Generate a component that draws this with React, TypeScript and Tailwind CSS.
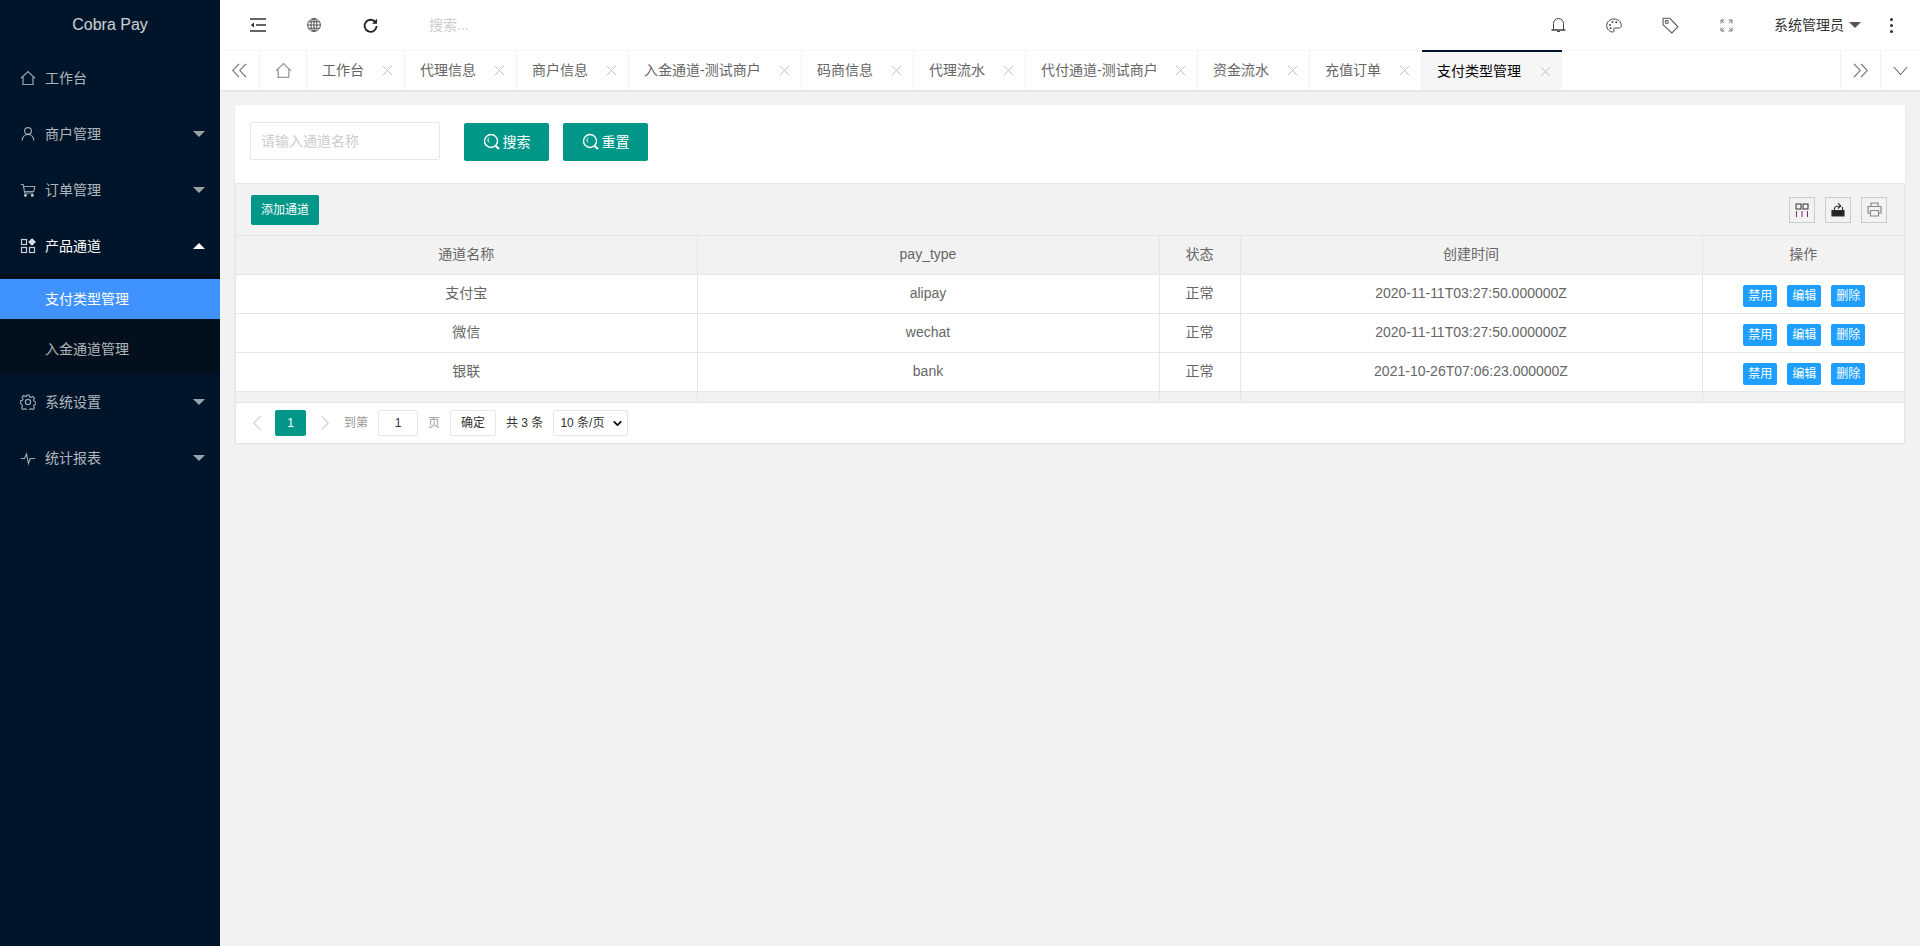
import { ReactNode } from "react";
import { ChevronDown, ChevronLeft, ChevronRight, X } from "lucide-react";

type MenuItem = {
    label: string;
    icon: ReactNode;
    arrow?: "down" | "up";
    active?: boolean;
    children?: { label: string; active?: boolean }[];
};

const Svg = ({ size = 16, children }: { size?: number; children: ReactNode }) => (
    <svg width={size} height={size} viewBox="0 0 16 16" fill="none" stroke="currentColor" strokeWidth="1.2">
        {children}
    </svg>
);

const MENU: MenuItem[] = [
    {
        label: "工作台",
        icon: (
            <Svg>
                <path d="M1 8.200 8 1.500l7 6.700M3 7v7.500h10V7" />
            </Svg>
        ),
    },
    {
        label: "商户管理",
        arrow: "down",
        icon: (
            <Svg>
                <circle cx="8" cy="5" r="3.400" />
                <path d="M2.200 14.500c.3-3.600 2.600-6 5.800-6s5.500 2.400 5.800 6" />
            </Svg>
        ),
    },
    {
        label: "订单管理",
        arrow: "down",
        icon: (
            <Svg>
                <path d="M.8 2.500h2.400l1.500 8.500h8.600M3.600 4.500h11.200l-1 5H4.500" />
                <circle cx="5.500" cy="13.300" r="1" fill="currentColor" />
                <circle cx="12.300" cy="13.300" r="1" fill="currentColor" />
            </Svg>
        ),
    },
    {
        label: "产品通道",
        arrow: "up",
        active: true,
        icon: (
            <Svg>
                <rect x="1.500" y="1.500" width="5" height="5" />
                <rect x="1.500" y="9.500" width="5" height="5" />
                <rect x="9.500" y="9.500" width="5" height="5" />
                <path d="M12 1l3 3-3 3-3-3z" fill="currentColor" />
            </Svg>
        ),
        children: [{ label: "支付类型管理", active: true }, { label: "入金通道管理" }],
    },
    {
        label: "系统设置",
        arrow: "down",
        icon: (
            <Svg>
                <circle cx="8" cy="8" r="2.600" />
                <path d="M6.800 1h2.400l.4 1.900 1.500.7 1.700-1 1.700 1.700-1 1.700.7 1.500 1.800.4v2.400l-1.800.4-.7 1.500 1 1.700-1.700 1.700-1.700-1-1.500.7-.4 1.800H6.800l-.4-1.800-1.500-.7-1.700 1-1.700-1.700 1-1.700-.7-1.500L.5 9.200V6.800l1.800-.4.700-1.500-1-1.700 1.700-1.700 1.700 1 1.500-.7z" />
            </Svg>
        ),
    },
    {
        label: "统计报表",
        arrow: "down",
        icon: (
            <Svg>
                <path d="M.8 8.500h3.700l2-4.500 2 9.500 1.700-5h5" />
            </Svg>
        ),
    },
];

const TABS = [
    { label: "工作台", width: 98 },
    { label: "代理信息", width: 112 },
    { label: "商户信息", width: 112 },
    { label: "入金通道-测试商户", width: 173 },
    { label: "码商信息", width: 112 },
    { label: "代理流水", width: 112 },
    { label: "代付通道-测试商户", width: 172 },
    { label: "资金流水", width: 112 },
    { label: "充值订单", width: 112 },
];

const ROWS = [
    { name: "支付宝", type: "alipay", time: "2020-11-11T03:27:50.000000Z" },
    { name: "微信", type: "wechat", time: "2020-11-11T03:27:50.000000Z" },
    { name: "银联", type: "bank", time: "2021-10-26T07:06:23.000000Z" },
];

const SearchIcon = () => (
    <svg width="18" height="18" viewBox="0 0 18 18" fill="none" stroke="currentColor" className="mr-[2px]">
        <circle cx="8" cy="8" r="6.500" strokeWidth="1.400" />
        <path d="M6 4.500c-1.300 1-1.300 4 0 5" strokeWidth="1" />
        <path d="M12.700 13l3.300 3" strokeWidth="2.200" />
    </svg>
);

function Sidebar() {
    return (
        <aside className="flex h-full w-[220px] shrink-0 flex-col bg-[#00152a]">
            <div className="h-[50px] text-center text-[16px] leading-[50px] text-white/80">Cobra Pay</div>
            {MENU.map((item) => (
                <div key={item.label}>
                    <div
                        className={`flex h-[56px] items-center pl-[20px] pr-[15px] text-[14px] ${
                            item.active ? "text-white" : "text-white/70"
                        }`}
                    >
                        <span className={`mr-[9px] ${item.active ? "text-white/80" : "text-white/60"}`}>{item.icon}</span>
                        <span className="flex-1">{item.label}</span>
                        {item.arrow === "down" && (
                            <span className="border-x-[6px] border-t-[6px] border-x-transparent border-t-white/60" />
                        )}
                        {item.arrow === "up" && (
                            <span className="border-x-[6px] border-b-[6px] border-x-transparent border-b-white" />
                        )}
                    </div>
                    {item.children && (
                        <div className="flex flex-col gap-[10px] bg-[#020f1c] py-[5px]">
                            {item.children.map((child) => (
                                <div
                                    key={child.label}
                                    className={`h-[40px] pl-[45px] text-[14px] leading-[40px] ${
                                        child.active ? "bg-[#3f92ff] text-white" : "text-white/70"
                                    }`}
                                >
                                    {child.label}
                                </div>
                            ))}
                        </div>
                    )}
                </div>
            ))}
        </aside>
    );
}

function Header() {
    return (
        <header className="flex h-[50px] shrink-0 items-center bg-white pl-[10px] pr-[27px] text-[#333]">
            <div className="flex h-full w-[56px] items-center justify-center">
                <svg width="16" height="14" viewBox="0 0 16 14" fill="none" stroke="currentColor" strokeWidth="1.300">
                    <path d="M0 1h16M6 7h10M0 13h16" />
                    <path d="M4 4.500v5L.8 7z" fill="currentColor" stroke="none" />
                </svg>
            </div>
            <div className="flex h-full w-[56px] items-center justify-center">
                <svg width="14" height="14" viewBox="0 0 14 14" fill="none" stroke="#444" strokeWidth="0.900">
                    <circle cx="7" cy="7" r="6.400" />
                    <ellipse cx="7" cy="7" rx="3" ry="6.400" />
                    <path d="M7 .6v12.800M.6 7h12.800M1.500 3.800h11M1.500 10.200h11" />
                </svg>
            </div>
            <div className="flex h-full w-[56px] items-center justify-center">
                <svg width="15" height="15" viewBox="0 0 15 15" fill="none" stroke="#222" strokeWidth="1.800">
                    <path d="M12.500 4.300A6 6 0 1 0 13.600 8" />
                    <path d="M14 .8v4.900H9.100" fill="#222" stroke="none" />
                </svg>
            </div>
            <div className="ml-[31px] flex-1 text-[14px] text-[#ccc]">搜索...</div>
            <div className="flex h-full w-[56px] items-center justify-center">
                <svg width="15" height="16" viewBox="0 0 15 16" fill="none" stroke="#444" strokeWidth="1">
                    <path d="M2.500 12.800V6.500a5 5 0 0 1 10 0v6.300" />
                    <path d="M.5 13h14" strokeWidth="1.300" stroke="#222" />
                    <path d="M6 14.500h3" />
                </svg>
            </div>
            <div className="flex h-full w-[56px] items-center justify-center">
                <svg width="16" height="15" viewBox="0 0 16 15" fill="none" stroke="#444" strokeWidth="1">
                    <path d="M8 1C4 1 .7 3.800.7 7.500S3.700 14 6.800 14c1.500 0 1.300-1.500.9-2.300-.4-1 .3-1.700 1.300-1.700h3.500c1.800 0 2.800-1 2.800-2.500C15.300 3.800 12 1 8 1z" />
                    <circle cx="4" cy="7" r="1" fill="#444" stroke="none" />
                    <circle cx="6.500" cy="4" r="1" fill="#444" stroke="none" />
                    <circle cx="10.300" cy="4.200" r="1" fill="#444" stroke="none" />
                    <circle cx="4.600" cy="10.200" r="1" fill="#444" stroke="none" />
                </svg>
            </div>
            <div className="flex h-full w-[56px] items-center justify-center">
                <svg width="17" height="17" viewBox="0 0 16 16" fill="none" stroke="#555" strokeWidth="1">
                    <path d="M1 1.200h6.300l7.700 8-5.700 5.800L1 7.400z" />
                    <circle cx="4.500" cy="4.600" r="1.400" />
                </svg>
            </div>
            <div className="flex h-full w-[56px] items-center justify-center">
                <svg width="13" height="13" viewBox="0 0 13 13" fill="none" stroke="#777" strokeWidth="1">
                    <path d="M1 4.500V1h3.500M1 1l3 3M12 4.500V1H8.500M12 1 9 4M1 8.500V12h3.500M1 12l3-3M12 8.500V12H8.500M12 12 9 9" />
                </svg>
            </div>
            <div className="ml-[20px] flex items-center text-[14px] text-[#333]">
                系统管理员
                <span className="ml-[5px] border-x-[6px] border-t-[6px] border-x-transparent border-t-[#555]" />
            </div>
            <div className="ml-[29px] flex flex-col gap-[3px]">
                <span className="h-[3px] w-[3px] rounded-full bg-[#333]" />
                <span className="h-[3px] w-[3px] rounded-full bg-[#333]" />
                <span className="h-[3px] w-[3px] rounded-full bg-[#333]" />
            </div>
        </header>
    );
}

function TabBar() {
    return (
        <div className="flex h-[40px] shrink-0 items-stretch border-t border-[#f6f6f6] bg-white text-[14px] text-[#666] shadow-[0_1px_2px_rgba(0,0,0,0.1)]">
            <div className="flex w-[40px] items-center justify-center border-r border-[#f2f2f2]">
                <svg width="15" height="15" viewBox="0 0 15 15" fill="none" stroke="#666" strokeWidth="1.100">
                    <path d="M7 .8.8 7.500 7 14.200M14 .8 7.800 7.500 14 14.200" />
                </svg>
            </div>
            <div className="flex w-[47px] items-center justify-center border-r border-[#f2f2f2] text-[#999]">
                <Svg size={17}>
                    <path d="M1 8.200 8 1.500l7 6.700M3 7v7.500h10V7" />
                </Svg>
            </div>
            {TABS.map((tab) => (
                <div
                    key={tab.label}
                    className="flex items-center justify-between border-r border-[#f2f2f2] pl-[15px] pr-[8px]"
                    style={{ width: tab.width }}
                >
                    <span>{tab.label}</span>
                    <X size={17} strokeWidth={1.200} className="text-[#bbb]" />
                </div>
            ))}
            <div className="-mt-px flex w-[140px] items-center justify-between border-t-2 border-[#00152a] bg-[#f6f6f6] pl-[15px] pr-[8px] text-black">
                <span>支付类型管理</span>
                <X size={17} strokeWidth={1.200} className="text-[#bbb]" />
            </div>
            <div className="flex-1" />
            <div className="flex w-[40px] items-center justify-center border-l border-[#f2f2f2]">
                <svg width="15" height="15" viewBox="0 0 15 15" fill="none" stroke="#666" strokeWidth="1.100">
                    <path d="M1 .8 7.200 7.500 1 14.200M8 .8l6.200 6.700L8 14.200" />
                </svg>
            </div>
            <div className="flex w-[40px] items-center justify-center border-l border-[#f2f2f2]">
                <svg width="15" height="10" viewBox="0 0 15 10" fill="none" stroke="#666" strokeWidth="1.100">
                    <path d="M.8 1 7.500 8.500 14.200 1" />
                </svg>
            </div>
        </div>
    );
}

function ToolIcon({ children }: { children: ReactNode }) {
    return (
        <div className="flex h-[26px] w-[26px] items-center justify-center border border-[#ccc] text-[#333]">
            {children}
        </div>
    );
}

function DataTable() {
    const th = "h-[38px] border-r border-b border-[#e6e6e6] text-center font-normal";
    const td = "h-[39px] border-r border-b border-[#e6e6e6] text-center";
    return (
        <table className="w-full table-fixed border-collapse text-[14px] text-[#666]">
            <colgroup>
                <col className="w-[461px]" />
                <col className="w-[462px]" />
                <col className="w-[81px]" />
                <col className="w-[462px]" />
                <col />
            </colgroup>
            <thead>
                <tr className="bg-[#f2f2f2]">
                    <th className={th}>通道名称</th>
                    <th className={th}>pay_type</th>
                    <th className={th}>状态</th>
                    <th className={th}>创建时间</th>
                    <th className={`${th} border-r-0`}>操作</th>
                </tr>
            </thead>
            <tbody>
                {ROWS.map((row) => (
                    <tr key={row.type}>
                        <td className={td}>{row.name}</td>
                        <td className={td}>{row.type}</td>
                        <td className={td}>正常</td>
                        <td className={td}>{row.time}</td>
                        <td className={`${td} border-r-0`}>
                            <div className="flex justify-center gap-[10px] pl-[2px] pt-[4px]">
                                {["禁用", "编辑", "删除"].map((action) => (
                                    <span
                                        key={action}
                                        className="h-[22px] w-[34px] rounded-[2px] bg-[#1e9fff] text-center text-[12px] leading-[22px] text-white"
                                    >
                                        {action}
                                    </span>
                                ))}
                            </div>
                        </td>
                    </tr>
                ))}
                <tr className="bg-[#f2f2f2]">
                    <td className="h-[11px] border-r border-[#e6e6e6]" />
                    <td className="h-[11px] border-r border-[#e6e6e6]" />
                    <td className="h-[11px] border-r border-[#e6e6e6]" />
                    <td className="h-[11px] border-r border-[#e6e6e6]" />
                    <td className="h-[11px]" />
                </tr>
            </tbody>
        </table>
    );
}

function Pager() {
    return (
        <div className="flex h-[41px] items-center border-t border-[#e6e6e6] bg-white text-[12px] text-[#999]">
            <ChevronLeft size={26} strokeWidth={1} className="ml-[8px] text-[#d2d2d2]" />
            <span className="ml-[5px] h-[26px] w-[31px] rounded-[2px] bg-[#009688] text-center leading-[26px] text-white">1</span>
            <ChevronRight size={26} strokeWidth={1} className="ml-[6px] text-[#d2d2d2]" />
            <span className="ml-[6px]">到第</span>
            <span className="ml-[10px] h-[26px] w-[40px] rounded-[2px] border border-[#e6e6e6] text-center leading-[24px] text-[#333]">1</span>
            <span className="ml-[10px]">页</span>
            <span className="ml-[10px] h-[26px] w-[46px] rounded-[2px] border border-[#e6e6e6] text-center leading-[24px] text-[#333]">确定</span>
            <span className="ml-[10px] text-[#333]">共 3 条</span>
            <span className="ml-[10px] flex h-[26px] w-[75px] items-center justify-between rounded-[2px] border border-[#e6e6e6] pl-[6px] pr-[3px] text-[#333]">
                10 条/页
                <ChevronDown size={13} strokeWidth={3} className="text-black" />
            </span>
        </div>
    );
}

export default function App() {
    return (
        <div className="flex h-screen w-full overflow-hidden bg-[#f2f2f2] font-['Liberation_Sans','Noto_Sans_CJK_SC',sans-serif]">
            <Sidebar />
            <main className="flex min-w-0 flex-1 flex-col">
                <Header />
                <TabBar />
                <div className="mx-[15px] mt-[15px] rounded-[2px] bg-white shadow-[0_1px_2px_rgba(0,0,0,0.08)]">
                    {/* Search form */}
                    <div className="flex h-[78px] items-start pl-[15px] pt-[17px]">
                        <div className="h-[38px] w-[190px] rounded-[2px] border border-[#e6e6e6] pl-[10px] text-[14px] leading-[36px] text-[#ccc]">
                            请输入通道名称
                        </div>
                        <button className="ml-[24px] mt-[1px] flex h-[38px] w-[85px] items-center justify-center rounded-[2px] bg-[#009688] text-[14px] text-white">
                            <SearchIcon />
                            搜索
                        </button>
                        <button className="ml-[14px] mt-[1px] flex h-[38px] w-[85px] items-center justify-center rounded-[2px] bg-[#009688] text-[14px] text-white">
                            <SearchIcon />
                            重置
                        </button>
                    </div>

                    {/* Table box */}
                    <div className="border-x border-t border-[#e6e6e6]">
                        <div className="flex h-[52px] items-center justify-between border-b border-[#e6e6e6] bg-[#f2f2f2] pl-[15px] pr-[17px]">
                            <button className="h-[30px] w-[68px] rounded-[2px] bg-[#009688] text-[12px] text-white">添加通道</button>
                            <div className="flex gap-[10px]">
                                <ToolIcon>
                                    <svg width="14" height="14" viewBox="0 0 14 14" fill="none" stroke="#333" strokeWidth="1">
                                        <rect x="1" y="1" width="5" height="5" />
                                        <rect x="8" y="1" width="5" height="5" />
                                        <path d="M1.500 8v6M7 8v6M12.500 8v6" stroke="#7a2a7a" />
                                    </svg>
                                </ToolIcon>
                                <ToolIcon>
                                    <svg width="14" height="15" viewBox="0 0 14 15" fill="none" stroke="#333" strokeWidth="1.200">
                                        <path d="M1 8.500h12V14H1z" fill="#222" />
                                        <path d="M3.500 8.500V6.500c0-1.500 1.500-2.500 5-2.500M7 1.200 9.800 4 7 6.500M11.500 5v3.500" />
                                    </svg>
                                </ToolIcon>
                                <ToolIcon>
                                    <svg width="15" height="15" viewBox="0 0 15 15" fill="none" stroke="#888" strokeWidth="1.200">
                                        <path d="M4 4V1h7v3M3.500 11H1V4.500h13V11h-2.500" />
                                        <path d="M3.500 8.500h8V14h-8z" />
                                    </svg>
                                </ToolIcon>
                            </div>
                        </div>
                        <DataTable />
                        <Pager />
                    </div>
                </div>
            </main>
        </div>
    );
}
